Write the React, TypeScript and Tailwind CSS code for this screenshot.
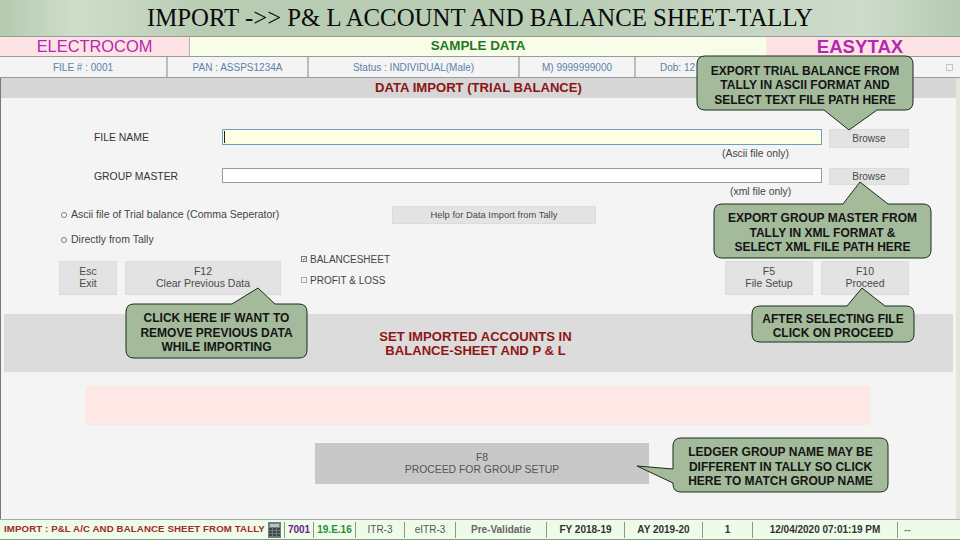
const sans = "font-['Liberation_Sans',Arial,sans-serif]";

// rounded box with a pointer; coordinates are local to the callout box
const calloutPath = (w: number, h: number, tail: number[]) => {
  const r = 8;
  const [a, tx, ty, b] = tail;
  const top = ty < 0 ? `L${a} 0 L${tx} ${ty} L${b} 0 ` : "";
  const bottom = ty > h ? `L${b} ${h} L${tx} ${ty} L${a} ${h} ` : "";
  const left = tx < 0 ? `L0 ${b} L${tx} ${ty} L0 ${a} ` : "";
  return (
    `M${r} 0 ${top}L${w - r} 0 Q${w} 0 ${w} ${r} L${w} ${h - r} Q${w} ${h} ${w - r} ${h} ` +
    `${bottom}L${r} ${h} Q0 ${h} 0 ${h - r} ${left}L0 ${r} Q0 0 ${r} 0 Z`
  );
};

const Callout = ({
  className,
  w,
  h,
  tail,
  lines,
}: {
  className: string;
  w: number;
  h: number;
  tail: number[];
  lines: string[];
}) => (
  <div className={`absolute z-10 flex flex-col items-center justify-center ${className}`}>
    <svg className="absolute left-0 top-0 overflow-visible" width={w} height={h}>
      <path d={calloutPath(w, h, tail)} fill="#a3bb9b" stroke="#1c2a1c" strokeWidth="1" />
    </svg>
    {lines.map((line) => (
      <span key={line} className="relative whitespace-nowrap text-[12px] font-bold leading-[14.5px] text-[#141414]">
        {line}
      </span>
    ))}
  </div>
);

const GreyButton = ({ className, top, bottom }: { className: string; top: string; bottom?: string }) => (
  <div
    className={`flex flex-col items-center justify-center border border-[#dcdcdc] bg-[#e3e3e3] leading-[12px] text-[#4a4a4a] ${className}`}
  >
    <span>{top}</span>
    {bottom && <span>{bottom}</span>}
  </div>
);

const infoCells = [
  { text: "FILE # : 0001", className: "w-[168px]" },
  { text: "PAN : ASSPS1234A", className: "w-[141px]" },
  { text: "Status : INDIVIDUAL(Male)", className: "w-[211px]" },
  { text: "M) 9999999000", className: "w-[116px]" },
];

const statusCells = [
  { text: "7001", className: "w-[29px] font-bold text-[#6a1b8a]" },
  { text: "19.E.16", className: "w-[42px] font-bold text-[#2e8b3a]" },
  { text: "ITR-3", className: "w-[49px] text-[#555]" },
  { text: "eITR-3", className: "w-[51px] text-[#555]" },
  { text: "Pre-Validatie", className: "w-[91px] font-bold text-[#666]" },
  { text: "FY 2018-19", className: "w-[78px] font-bold text-[#333]" },
  { text: "AY 2019-20", className: "w-[78px] font-bold text-[#333]" },
  { text: "1", className: "w-[50px] font-bold text-[#333]" },
  { text: "12/04/2020 07:01:19 PM", className: "w-[145px] font-bold text-[#333]" },
];

export default function App() {
  return (
    <div className={`relative flex h-[540px] w-[960px] flex-col overflow-hidden bg-[#bcd0b8] ${sans}`}>
      <div className="flex h-[36px] items-center justify-center bg-[linear-gradient(90deg,#b4cbb0_0%,#cfddcb_8%,#b7ccb3_22%,#b9cdb5_60%,#cddccb_90%,#b5cbb1_100%)] pb-[1px] font-['Liberation_Serif',serif] text-[24.8px] text-[#0a0a0a]">
        IMPORT -&gt;&gt; P&amp; L ACCOUNT AND BALANCE SHEET-TALLY
      </div>

      <div className="flex h-[21px] items-center border-y border-[#9a9a9a] bg-[#f8fde8]">
        <div className="flex h-full w-[190px] items-center justify-center border-r border-[#b5b5b5] bg-[#fde3e3] text-[16.4px] text-[#b428b4]">
          ELECTROCOM
        </div>
        <div className="flex-1 text-center text-[13.4px] font-bold text-[#1f7a1f]">SAMPLE DATA</div>
        <div className="flex h-full w-[194px] items-center justify-center bg-[#fde3e3] pr-[6px] text-[18.6px] font-bold text-[#b428b4]">
          EASYTAX
        </div>
      </div>

      <div className="flex h-[21px] border-b border-[#9a9a9a] bg-[#f4f4f4] text-[10px] text-[#5b82a8]">
        {infoCells.map((cell) => (
          <div key={cell.text} className={`flex items-center justify-center border-r-2 border-[#bdbdbd] ${cell.className}`}>
            {cell.text}
          </div>
        ))}
        <div className="flex flex-1 items-center justify-between pl-[24px] pr-[7px]">
          <span>Dob: 12</span>
          <div className="size-[7px] border border-[#c4c4c4]" />
        </div>
      </div>

      <div className="flex flex-1 flex-col border-l border-r-[4px] border-l-[#777] border-r-[#dfe8da] bg-[#f4f4f4]">
        <div className="flex h-[20px] items-center justify-center bg-[#d6d6d6] text-[13.1px] font-bold text-[#8b1414]">
          DATA IMPORT (TRIAL BALANCE)
        </div>

        <div className="mt-[31px] flex items-start pl-[93px]">
          <div className="w-[128px] pt-[1px] text-[10.4px] text-[#333]">FILE NAME</div>
          <div className="h-[16px] w-[600px] border border-[#6f9fc0] bg-[#ffffe3] pl-[1px]">
            <div className="mt-[1px] h-[12px] w-px bg-[#222]" />
          </div>
          <GreyButton className="ml-[7px] h-[19px] w-[80px] text-[10px]" top="Browse" />
        </div>
        <div className="h-[11px] pl-[721px] text-[10.4px] leading-[11px] text-[#444]">(Ascii file only)</div>

        <div className="mt-[9px] flex items-start pl-[93px]">
          <div className="w-[128px] pt-[1px] text-[10.4px] text-[#333]">GROUP MASTER</div>
          <div className="h-[15px] w-[600px] border border-[#999] bg-white" />
          <GreyButton className="ml-[7px] h-[17px] w-[80px] text-[10px]" top="Browse" />
        </div>
        <div className="mt-[1px] h-[11px] pl-[729px] text-[10.4px] leading-[11px] text-[#444]">(xml file only)</div>

        <div className="mt-[9px] flex items-center pl-[60px]">
          <div className="size-[6px] rounded-full border border-[#777] bg-white" />
          <div className="ml-[4px] w-[321px] text-[10.5px] text-[#444]">
            Ascii file of Trial balance (Comma Seperator)
          </div>
          <GreyButton className="h-[18px] w-[204px] text-[9.4px]" top="Help for Data Import from Tally" />
        </div>

        <div className="mt-[8px] flex h-[16px] items-center pl-[60px]">
          <div className="size-[6px] rounded-full border border-[#777] bg-white" />
          <div className="ml-[4px] text-[10.5px] text-[#444]">Directly from Tally</div>
        </div>

        <div className="mt-[13px] flex items-start pl-[58px]">
          <GreyButton className="h-[34px] w-[58px] pb-[2px] text-[10.5px]" top="Esc" bottom="Exit" />
          <GreyButton className="ml-[8px] h-[34px] w-[156px] pb-[2px] text-[10.5px]" top="F12" bottom="Clear Previous Data" />
          <div className="ml-[20px] mt-[-8px] flex w-[424px] flex-col gap-[9px] text-[10px] text-[#444]">
            <div className="flex h-[12px] items-center gap-[3px]">
              <div className="flex size-[6px] items-center justify-center border border-[#777] text-[6px] leading-none">✓</div>
              BALANCESHEET
            </div>
            <div className="flex h-[12px] items-center gap-[3px]">
              <div className="size-[6px] border border-[#aaa]" />
              PROFIT &amp; LOSS
            </div>
          </div>
          <GreyButton className="h-[34px] w-[88px] pb-[2px] text-[10.5px]" top="F5" bottom="File Setup" />
          <GreyButton className="ml-[8px] h-[34px] w-[88px] pb-[2px] text-[10.5px]" top="F10" bottom="Proceed" />
        </div>

        <div className="ml-[3px] mr-[3px] mt-[19px] flex h-[58px] flex-col items-center justify-center bg-[#dcdcdc] pr-[6px] pt-[2px] text-[13.1px] font-bold leading-[14.5px] text-[#8f1616]">
          <span>SET IMPORTED ACCOUNTS IN</span>
          <span>BALANCE-SHEET AND P &amp; L</span>
        </div>

        <div className="ml-[84px] mt-[14px] h-[39px] w-[785px] bg-[#fde8e6]" />

        <div className="ml-[314px] mt-[18px] flex h-[41px] w-[334px] flex-col items-center justify-center bg-[#c8c8c8] text-[10.4px] leading-[12px] text-[#555]">
          <span>F8</span>
          <span>PROCEED FOR GROUP SETUP</span>
        </div>
      </div>

      <div className="flex h-[21px] items-center border-y border-t-[#a8a8a8] border-b-[#8a9a8a] bg-[#eefbe8] pl-[4px] text-[10px]">
        <div className="w-[264px] whitespace-nowrap text-[9.7px] font-bold tracking-[0.1px] text-[#a32a2a]">
          IMPORT : P&amp;L A/C AND BALANCE SHEET FROM TALLY
        </div>
        <svg className="mr-[3px]" width="13" height="16" viewBox="0 0 13 16">
          <rect width="13" height="16" fill="#6f7f7c" />
          <rect x="2" y="2" width="9" height="3" fill="#b8c6c2" />
          {[6, 9, 12].map((y) =>
            [1, 5, 9].map((x) => <rect key={`${x}-${y}`} x={x} y={y} width="3" height="2" fill="#39474a" />),
          )}
        </svg>
        {statusCells.map((cell) => (
          <div
            key={cell.text}
            className={`flex h-[16px] items-center justify-center border-l border-[#8a9a8a] ${cell.className}`}
          >
            {cell.text}
          </div>
        ))}
        <div className="flex h-[16px] items-center border-l border-[#8a9a8a] pl-[6px] font-bold text-[#4f9a4f]">--</div>
      </div>

      <Callout
        className="left-[697px] top-[56px] h-[54px] w-[216px] pt-[5px]"
        w={216}
        h={54}
        tail={[127, 152, 74, 180]}
        lines={["EXPORT TRIAL BALANCE FROM", "TALLY IN ASCII FORMAT AND", "SELECT TEXT FILE PATH HERE"]}
      />
      <Callout
        className="left-[714px] top-[204px] h-[54px] w-[217px] pt-[4px]"
        w={217}
        h={54}
        tail={[129, 146, -22, 174]}
        lines={["EXPORT GROUP MASTER FROM", "TALLY IN XML FORMAT &", "SELECT XML FILE PATH HERE"]}
      />
      <Callout
        className="left-[126px] top-[304px] h-[54px] w-[181px] pt-[4px]"
        w={181}
        h={54}
        tail={[106, 132, -16, 149]}
        lines={["CLICK HERE IF WANT TO", "REMOVE PREVIOUS DATA", "WHILE IMPORTING"]}
      />
      <Callout
        className="left-[752px] top-[306px] h-[36px] w-[162px] pt-[4px]"
        w={162}
        h={36}
        tail={[95, 110, -18, 133]}
        lines={["AFTER SELECTING FILE", "CLICK ON PROCEED"]}
      />
      <Callout
        className="left-[673px] top-[438px] h-[54px] w-[215px] pt-[4px]"
        w={215}
        h={54}
        tail={[31, -36, 28, 45]}
        lines={["LEDGER GROUP NAME MAY BE", "DIFFERENT IN TALLY SO CLICK", "HERE TO MATCH GROUP NAME"]}
      />
    </div>
  );
}
